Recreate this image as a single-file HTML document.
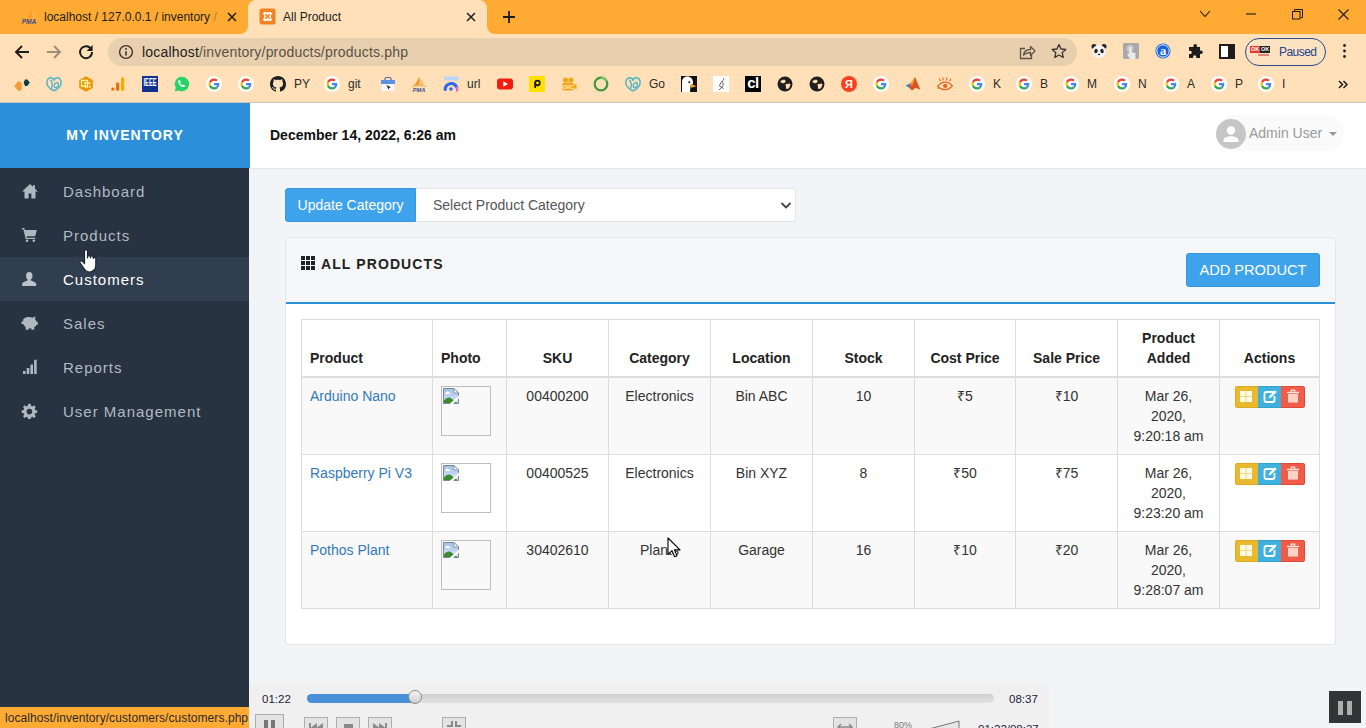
<!DOCTYPE html>
<html><head><meta charset="utf-8"><title>All Product</title>
<style>
*{box-sizing:border-box;margin:0;padding:0}
html,body{width:1366px;height:728px;overflow:hidden;background:#f3f4f8;font-family:"Liberation Sans",sans-serif;}
body{position:relative}
.abs{position:absolute}
/* ---------- browser chrome ---------- */
#tabstrip{position:absolute;left:0;top:0;width:1366px;height:34px;background:#ffaa33}
#tab2{position:absolute;left:248px;top:0;width:239px;height:34px;background:#ffe0b8;border-radius:8px 8px 0 0}
.tabtxt{position:absolute;top:10px;font-size:12px;color:#1d1d1d;white-space:nowrap}
#toolbar{position:absolute;left:0;top:34px;width:1366px;height:34px;background:#ffe0b8}
#omni{position:absolute;left:108px;top:4px;width:969px;height:28px;border-radius:14px;background:#e8cfae}
#omni .url{position:absolute;left:34px;top:6px;font-size:14px;letter-spacing:.19px;color:#5a5247;white-space:nowrap}
#omni .url b{font-weight:normal;color:#1d1d1d}
#bookmarks{position:absolute;left:0;top:68px;width:1366px;height:35px;background:#ffe0b8;border-bottom:1px solid #c9c3ba}
.bm{position:absolute;top:8px;width:16px;height:16px}
.bmt{position:absolute;top:9px;font-size:12px;color:#2a2a2a;white-space:nowrap}
/* ---------- page ---------- */
#page{position:absolute;left:0;top:103px;width:1366px;height:625px;background:#f3f4f8;overflow:hidden}
#sidebar{position:absolute;left:0;top:0;width:249px;height:625px;background:#273341}
#brand{position:absolute;left:0;top:0;width:250px;height:65px;background:#2b90d9;color:#fff;font-weight:bold;font-size:14px;letter-spacing:1px;text-align:center;line-height:65px}
#topbar{position:absolute;left:250px;top:0;width:1116px;height:66px;background:#fff;border-bottom:1px solid #e3e6ea}
#topbar .date{position:absolute;left:20px;top:24px;font-size:14px;font-weight:bold;color:#111}
.nav{position:absolute;left:0;width:249px;height:44px;color:#b1bac3;font-size:15px;letter-spacing:1px}
.nav span{position:absolute;left:63px;top:14px}
.nav.act{background:#303e4f;color:#fff}

/* ---------- content ---------- */
#upd{position:absolute;left:285px;top:85px;width:131px;height:34px;background:#3fa3ec;color:#fff;font-size:14px;line-height:33px;text-align:center;border-radius:3px 0 0 3px;border:1px solid #3498e0}
#sel{position:absolute;left:416px;top:85px;width:380px;height:34px;background:#fff;border:1px solid #e1e4e8;border-left:none;border-radius:0 4px 4px 0;color:#555;font-size:14px;line-height:32px;padding-left:17px}
#panel{position:absolute;left:285px;top:134px;width:1051px;height:408px;background:#fff;border:1px solid #e4e7ea;border-radius:4px}
#phead{position:absolute;left:0;top:0;width:1049px;height:66px;background:#f5f6f7;border-bottom:2px solid #2b90d9;border-radius:3px 3px 0 0}
#phead .ttl{position:absolute;left:35px;top:18px;font-size:14px;font-weight:bold;letter-spacing:1.1px;color:#222}
#addp{position:absolute;left:900px;top:15px;width:134px;height:34px;background:#3fa3ec;border:1px solid #3498e0;border-radius:3px;color:#fff;font-size:14.6px;line-height:32px;text-align:center}
table{position:absolute;left:15px;top:81px;border-collapse:collapse;width:1018px;table-layout:fixed;font-size:14px;color:#333;background:#fff}
th,td{border:1px solid #ddd;vertical-align:top;text-align:center;line-height:20px;padding:8px}
th{vertical-align:bottom;font-weight:bold;color:#222;border-bottom:2px solid #ddd;padding:8px;background:#fff}
td{height:77px;padding-top:8px}
tr.odd td{background:#f9f9f9}
td.l,th.l{text-align:left}
td a{color:#337ab7;text-decoration:none}
.ph{display:block;width:50px;height:50px;border:1px solid #bdbdbd;background:transparent;margin:0}

.ico{position:absolute;left:21px;fill:#b0b7be}
.nav.act .ico{fill:#bcc3ca}
#user{position:absolute;left:966px;top:12px;width:128px;height:36px;border-radius:18px;background:#fafafa}
#user .av{position:absolute;left:0;top:4px;width:30px;height:30px;border-radius:15px;background:#c6c6c6;overflow:hidden}
#user .nm{position:absolute;left:33px;top:10px;font-size:14px;color:#999;white-space:nowrap}
#user .car{position:absolute;left:113px;top:17px;width:0;height:0;border:4px solid transparent;border-top:4px solid #999;border-bottom:none}
.acts{display:inline-block;width:70px;height:22px;vertical-align:top;position:relative;border-radius:3px;overflow:hidden}
.acts i{position:absolute;top:0;height:22px}
.b1{left:0;width:23px;background:#e9b92f;border:1px solid #dcab22;border-right:none}
.b2{left:23px;width:23px;background:#40b1df;border:1px solid #35a3d1;border-left:none;border-right:none}
.b3{left:46px;width:24px;background:#f15c48;border:1px solid #de4a37;border-left:none}
.acts svg{position:absolute;left:0;top:0}
.brk{position:absolute;left:1px;top:1px}
.ph{position:relative}

/* ---------- overlays ---------- */
#status{position:absolute;left:0;top:707px;width:254px;height:21px;background:#ffaa33;border-top-right-radius:4px;font-size:12px;letter-spacing:.07px;color:#2a2a2a;line-height:23px;padding-left:5px;white-space:nowrap;overflow:hidden}
#vlc{position:absolute;left:249px;top:683px;width:800px;height:45px;background:#f0f0f0;overflow:hidden}
#vlc .t{position:absolute;top:10px;font-size:11.5px;color:#1b1b3a}
#vlc .trk{position:absolute;left:58px;top:10.5px;width:687px;height:9px;border-radius:4.5px;background:linear-gradient(#cfcfcf,#e2e2e2)}
#vlc .fil{position:absolute;left:58px;top:10.5px;width:108px;height:9px;border-radius:4.5px 0 0 4.5px;background:#4a90d9}
#vlc .knob{position:absolute;left:159px;top:7px;width:14px;height:14px;border-radius:7px;background:linear-gradient(#f4f4f4,#cfcfcf);border:1px solid #8a8a8a}
.vb{position:absolute;top:34px;width:24px;height:20px;background:#e3e3e3;border:1px solid #adadad}
#pausebox{position:absolute;left:1329px;top:691px;width:32px;height:32px;background:#323436}
#pausebox i{position:absolute;top:10px;width:5px;height:14px;background:#adafad}
</style></head><body>
<!--CHROME-->
<div id="tabstrip">
  <svg class="abs" style="left:20px;top:7px" width="18" height="18" viewBox="0 0 18 18"><path d="M7 11c1.800-2 3.300-4.500 4.200-7.500 1 2.500 1 5 .3 7.500z" fill="#ff9a30"/><path d="M12.300 11c.6-2 .6-4 .1-5.800 1.500 1.700 2.500 3.700 2.900 5.800z" fill="#ffb760"/><text x="9" y="16.500" text-anchor="middle" font-family="Liberation Sans,sans-serif" font-size="6.600" font-weight="bold" font-style="italic" fill="#3d4f8a">PMA</text></svg>
  <div class="tabtxt" style="left:44px;width:176px;overflow:hidden;padding-left:0"><span style="margin-left:0">localhost / 127.0.0.1 / inventory <span style="opacity:.35">/</span></span></div>
  <svg class="abs" style="left:227px;top:12px" width="10" height="10" viewBox="0 0 10 10"><path d="M1 1l8 8M9 1l-8 8" stroke="#1d1d1d" stroke-width="1.500"/></svg>
  <div id="tab2">
    <svg class="abs" style="left:11px;top:8px" width="17" height="17" viewBox="0 0 17 17"><rect x=".5" y=".5" width="16" height="16" rx="2.500" fill="#f58220"/><path d="M4.200 5.500a1.800 1.800 0 0 1 3-1.300h2.600a1.800 1.800 0 0 1 3 1.300c0 .8-.5 1.300-1 1.700v2.600c.5.400 1 .9 1 1.700a1.800 1.800 0 0 1-3 1.300H7.200a1.800 1.800 0 0 1-3-1.300c0-.8.500-1.300 1-1.700V7.200c-.5-.4-1-.9-1-1.700z" fill="#fff"/><path d="M6.300 6.200l4.400 4.600M10.700 6.200l-4.400 4.600" stroke="#f58220" stroke-width="1.600"/></svg>
    <div class="tabtxt" style="left:35px">All Product</div>
    <svg class="abs" style="left:218px;top:12px" width="10" height="10" viewBox="0 0 10 10"><path d="M1 1l8 8M9 1l-8 8" stroke="#1d1d1d" stroke-width="1.500"/></svg>
    <svg class="abs" style="left:-8px;top:26px" width="8" height="8" viewBox="0 0 8 8"><path d="M8 0v8H0a8 8 0 0 0 8-8z" fill="#ffe0b8"/></svg>
    <svg class="abs" style="left:239px;top:26px" width="8" height="8" viewBox="0 0 8 8"><path d="M0 0v8h8a8 8 0 0 1-8-8z" fill="#ffe0b8"/></svg>
  </div>
  <svg class="abs" style="left:502px;top:10px" width="14" height="14" viewBox="0 0 14 14"><path d="M7 1v12M1 7h12" stroke="#1d1d1d" stroke-width="1.800"/></svg>
  <svg class="abs" style="left:1199px;top:10px" width="12" height="8" viewBox="0 0 12 8"><path d="M1 1l5 5.500L11 1" fill="none" stroke="#1d1d1d" stroke-width="1.100"/></svg>
  <svg class="abs" style="left:1246px;top:13px" width="10" height="2" viewBox="0 0 10 2"><path d="M0 1h10" stroke="#1d1d1d" stroke-width="1.100"/></svg>
  <svg class="abs" style="left:1292px;top:9px" width="11" height="11" viewBox="0 0 11 11"><rect x=".5" y="2.500" width="7.500" height="7.500" fill="none" stroke="#1d1d1d"/><path d="M2.500 2.500v-2h8v8h-2" fill="none" stroke="#1d1d1d"/></svg>
  <svg class="abs" style="left:1338px;top:9px" width="11" height="11" viewBox="0 0 11 11"><path d="M.5.500l10 10M10.500.500l-10 10" stroke="#1d1d1d" stroke-width="1.100"/></svg>
</div>
<div id="toolbar">
  <svg class="abs" style="left:14px;top:10px" width="16" height="16" viewBox="0 0 16 16"><path d="M15 8H2.500M8 2L2 8l6 6" fill="none" stroke="#1d1d1d" stroke-width="1.900"/></svg>
  <svg class="abs" style="left:46px;top:10px" width="16" height="16" viewBox="0 0 16 16"><path d="M1 8h12.500M8 2l6 6-6 6" fill="none" stroke="#a08d78" stroke-width="1.900"/></svg>
  <svg class="abs" style="left:78px;top:10px" width="16" height="16" viewBox="0 0 16 16"><path d="M13.200 5.200A6 6 0 1 0 14 8" fill="none" stroke="#1d1d1d" stroke-width="1.900"/><path d="M14.600 1v6h-6z" fill="#1d1d1d"/></svg>
  <div id="omni">
    <svg class="abs" style="left:10px;top:6px" width="16" height="16" viewBox="0 0 16 16"><circle cx="8" cy="8" r="6.400" fill="none" stroke="#3a352f" stroke-width="1.400"/><path d="M8 7.200v4.300" stroke="#3a352f" stroke-width="1.600"/><circle cx="8" cy="4.900" r=".95" fill="#3a352f"/></svg>
    <div class="url"><b>localhost</b>/inventory/products/products.php</div>
    <svg class="abs" style="left:911px;top:6px" width="17" height="16" viewBox="0 0 17 16"><path d="M6 4.500H1.500v10h11V11" fill="none" stroke="#5a5247" stroke-width="1.300"/><path d="M4.500 11c.5-4 3-5.500 7-5.500V2.500l4.500 4.500-4.500 4.500V8.500c-3 0-5 .5-7 2.500z" fill="none" stroke="#5a5247" stroke-width="1.300" stroke-linejoin="round"/></svg>
    <svg class="abs" style="left:943px;top:5px" width="16" height="16" viewBox="0 0 16 16"><path d="M8 1.500l2 4.500 4.800.5-3.600 3.200 1 4.800L8 12l-4.200 2.500 1-4.800L1.200 6.500 6 6z" fill="none" stroke="#3a352f" stroke-width="1.300" stroke-linejoin="round"/></svg>
  </div>
  <svg class="abs" style="left:1091px;top:9px" width="16" height="16" viewBox="0 0 16 16"><circle cx="3" cy="3.500" r="2.500" fill="#222"/><circle cx="13" cy="3.500" r="2.500" fill="#222"/><ellipse cx="8" cy="8.500" rx="7" ry="6.500" fill="#f4f4f4"/><ellipse cx="5" cy="8" rx="1.700" ry="2.200" fill="#222" transform="rotate(20 5 8)"/><ellipse cx="11" cy="8" rx="1.700" ry="2.200" fill="#222" transform="rotate(-20 11 8)"/><ellipse cx="8" cy="11.500" rx="1.200" ry=".8" fill="#222"/></svg>
  <svg class="abs" style="left:1123px;top:9px" width="16" height="16" viewBox="0 0 16 16"><rect width="16" height="16" rx="1.500" fill="#a9a9a9"/><circle cx="7" cy="5.500" r="3.500" fill="#c9c9c9"/><path d="M6 5v6l-1.500-1v2l2.500 4h5.500v-6l-4-1V5a1.200 1.200 0 0 0-2.500 0z" fill="#e9e9e9"/></svg>
  <svg class="abs" style="left:1155px;top:9px" width="16" height="16" viewBox="0 0 16 16"><circle cx="8" cy="8" r="7.600" fill="#1a63d8"/><circle cx="8" cy="8" r="6.200" fill="none" stroke="#fff" stroke-width=".9"/><text x="8" y="11.600" text-anchor="middle" font-family="Liberation Serif,serif" font-size="12.500" font-weight="bold" fill="#fff">a</text></svg>
  <svg class="abs" style="left:1187px;top:9px" width="16" height="16" viewBox="0 0 16 16"><path d="M6.500 2.800a1.700 1.700 0 0 1 3.400 0V4H13v3.500h1a1.800 1.800 0 0 1 0 3.600h-1V15H9.300v-1.200a1.600 1.600 0 0 0-3.200 0V15H2v-4h1.200a1.600 1.600 0 0 0 0-3.200H2V4h4.500z" fill="#1d1d1d"/></svg>
  <svg class="abs" style="left:1219px;top:10px" width="16" height="15" viewBox="0 0 16 15"><rect x="1" y="1" width="14" height="13" fill="#fff" stroke="#1d1d1d" stroke-width="2"/><rect x="9" y="1" width="6" height="13" fill="#1d1d1d"/></svg>
  <div class="abs" style="left:1245px;top:4px;width:81px;height:28px;border:1px solid #2a4a8a;border-radius:14px;background:#fbe3c2">
    <div class="abs" style="left:4px;top:5px;width:20px;height:16px;font-size:5.500px;font-weight:bold;color:#fff;line-height:7px"><span style="position:absolute;left:0;top:2px;background:#e23b2a;padding:0 1px">OK</span><span style="position:absolute;left:10px;top:2px;background:#222;padding:0 1px">OK</span><span style="position:absolute;left:8px;top:10px;width:11px;height:2px;background:#e2837a"></span></div>
    <div class="abs" style="left:33px;top:6px;font-size:12px;color:#27428a;letter-spacing:-.55px">Paused</div>
  </div>
  <svg class="abs" style="left:1342px;top:9px" width="5" height="16" viewBox="0 0 5 16"><circle cx="2.500" cy="2.500" r="1.400" fill="#1d1d1d"/><circle cx="2.500" cy="8" r="1.400" fill="#1d1d1d"/><circle cx="2.500" cy="13.500" r="1.400" fill="#1d1d1d"/></svg>
</div>
<div id="bookmarks">
  <svg class="bm" style="left:14px" viewBox="0 0 16 16"><path d="M.2 10l4.300-5 3.200 1.500v7.500L4.500 15z" fill="#f7983a"/><path d="M11 3.500l2.300 0 2.500 3-2.500 3.500h-2.300l-1.300-3.300z" fill="#0d3c47"/></svg>
  <svg class="bm" style="left:46px" viewBox="0 0 16 16"><path d="M8 14.800C4 13 .8 10 .8 6.300.8 3.500 2.700 1.600 4.900 1.700 6.500 1.800 7.600 3 8 4.300 8.400 3 9.500 1.800 11.100 1.700c2.200-.1 4.100 1.800 4.100 4.600 0 3.700-3.200 6.700-7.200 8.500z" fill="none" stroke="#55b4ca" stroke-width="1.500" stroke-linejoin="round"/><path d="M4.300 3.800c2 1.800 2.700 5.700 1.200 8.800M12.200 7c-2.200-.7-4.300.9-4 3.100.3 2 2.700 2.200 3.700.6.600-1 .8-2.400.3-3.700z" fill="none" stroke="#55b4ca" stroke-width="1.400"/></svg>
  <svg class="bm" style="left:78px" viewBox="0 0 16 16"><path d="M8 .3l6.800 3.800v7.800L8 15.700 1.200 11.900V4.100z" fill="#e8960c"/><path d="M3.500 4.500h6v5.500h-6zM6 7h6.500M7.300 12V8.500M9.500 12V7.800M11.800 12V9.500" fill="none" stroke="#fff3a0" stroke-width="1.300"/></svg>
  <svg class="bm" style="left:110px" viewBox="0 0 16 16"><rect x="11" y="1.200" width="3.300" height="13.600" rx="1.600" fill="#f9ab00"/><rect x="6" y="6.200" width="3.300" height="8.600" rx="1.600" fill="#e8710a"/><circle cx="2.900" cy="13.100" r="1.700" fill="#e8710a"/></svg>
  <svg class="bm" style="left:142px" viewBox="0 0 16 16"><rect width="16" height="16" fill="#12308f"/><text x="8" y="8" text-anchor="middle" font-family="Liberation Sans,sans-serif" font-size="7.500" font-weight="bold" fill="#fff" textLength="13" lengthAdjust="spacingAndGlyphs" transform="translate(0 -1.500) scale(1 1.450)">IEEE</text></svg>
  <svg class="bm" style="left:174px" viewBox="0 0 16 16"><path d="M8 .8a7.200 7.200 0 0 0-6.200 10.900L.8 15.400l3.800-1A7.200 7.200 0 1 0 8 .8z" fill="#25d366"/><path d="M5.700 4.300c-.3-.5-.9-.4-1.200.1-.8 1.300-.2 3 1.500 4.800 1.800 1.800 3.500 2.300 4.800 1.500.5-.3.600-.9.100-1.200l-1.300-.8c-.3-.2-.7-.1-.9.200l-.3.400c-.9-.4-1.900-1.400-2.300-2.300l.4-.3c.3-.2.400-.6.200-.9z" fill="#fff"/></svg>
  <svg class="bm" style="left:206px" viewBox="0 0 16 16"><circle cx="8" cy="8" r="8" fill="#fff"/><g transform="translate(2.500 2.500) scale(0.229)"><path fill="#EA4335" d="M24 9.5c3.54 0 6.71 1.22 9.21 3.6l6.85-6.85C35.9 2.38 30.47 0 24 0 14.62 0 6.51 5.38 2.56 13.22l7.98 6.19C12.43 13.72 17.74 9.5 24 9.5z"/><path fill="#4285F4" d="M46.98 24.55c0-1.57-.15-3.09-.38-4.55H24v9.02h12.94c-.58 2.96-2.26 5.48-4.78 7.18l7.73 6c4.51-4.18 7.09-10.36 7.09-17.65z"/><path fill="#FBBC05" d="M10.53 28.59c-.48-1.45-.76-2.99-.76-4.59s.27-3.14.76-4.59l-7.98-6.19C.92 16.46 0 20.12 0 24c0 3.88.92 7.54 2.56 10.78l7.97-6.19z"/><path fill="#34A853" d="M24 48c6.480 0 11.93-2.13 15.89-5.81l-7.73-6c-2.15 1.45-4.92 2.3-8.16 2.3-6.26 0-11.57-4.22-13.47-9.91l-7.98 6.19C6.51 42.62 14.62 48 24 48z"/></g></svg>
  <svg class="bm" style="left:238px" viewBox="0 0 16 16"><circle cx="8" cy="8" r="8" fill="#fff"/><g transform="translate(2.500 2.500) scale(0.229)"><path fill="#EA4335" d="M24 9.5c3.54 0 6.71 1.22 9.21 3.6l6.85-6.85C35.9 2.38 30.47 0 24 0 14.62 0 6.51 5.38 2.56 13.22l7.98 6.19C12.43 13.72 17.74 9.5 24 9.5z"/><path fill="#4285F4" d="M46.98 24.55c0-1.57-.15-3.09-.38-4.55H24v9.02h12.94c-.58 2.96-2.26 5.48-4.78 7.18l7.73 6c4.51-4.18 7.09-10.36 7.09-17.65z"/><path fill="#FBBC05" d="M10.53 28.59c-.48-1.45-.76-2.99-.76-4.59s.27-3.14.76-4.59l-7.98-6.19C.92 16.46 0 20.12 0 24c0 3.88.92 7.54 2.56 10.78l7.97-6.19z"/><path fill="#34A853" d="M24 48c6.480 0 11.93-2.13 15.89-5.81l-7.73-6c-2.15 1.45-4.92 2.3-8.16 2.3-6.26 0-11.57-4.22-13.47-9.91l-7.98 6.19C6.51 42.62 14.62 48 24 48z"/></g></svg>
  <svg class="bm" style="left:270px" viewBox="0 0 16 16"><path fill="#1b1f23" d="M8 0C3.580 0 0 3.580 0 8c0 3.540 2.290 6.530 5.470 7.590.4.070.55-.17.55-.38 0-.19-.01-.82-.01-1.490-2.010.37-2.530-.49-2.690-.94-.09-.23-.48-.94-.82-1.130-.28-.15-.68-.52-.01-.53.63-.01 1.080.58 1.230.82.72 1.210 1.870.87 2.330.66.070-.52.280-.87.510-1.070-1.780-.2-3.640-.89-3.640-3.950 0-.87.310-1.590.82-2.150-.08-.2-.36-1.020.08-2.120 0 0 .67-.21 2.200.82.64-.18 1.320-.27 2-.27.680 0 1.360.09 2 .27 1.530-1.040 2.200-.82 2.200-.82.44 1.100.16 1.920.08 2.120.51.56.82 1.270.82 2.150 0 3.070-1.870 3.750-3.650 3.950.29.25.54.73.54 1.480 0 1.070-.01 1.930-.01 2.200 0 .21.15.46.55.38A8.013 8.013 0 0 0 16 8c0-4.420-3.580-8-8-8z"/></svg>
  <svg class="bm" style="left:324px" viewBox="0 0 16 16"><circle cx="8" cy="8" r="8" fill="#fff"/><g transform="translate(2.500 2.500) scale(0.229)"><path fill="#EA4335" d="M24 9.5c3.54 0 6.71 1.22 9.21 3.6l6.85-6.85C35.9 2.38 30.47 0 24 0 14.62 0 6.51 5.38 2.56 13.22l7.98 6.19C12.43 13.72 17.74 9.5 24 9.5z"/><path fill="#4285F4" d="M46.98 24.55c0-1.57-.15-3.09-.38-4.55H24v9.02h12.94c-.58 2.96-2.26 5.48-4.78 7.18l7.73 6c4.51-4.18 7.09-10.36 7.09-17.65z"/><path fill="#FBBC05" d="M10.53 28.59c-.48-1.45-.76-2.99-.76-4.59s.27-3.14.76-4.59l-7.98-6.19C.92 16.46 0 20.12 0 24c0 3.88.92 7.54 2.56 10.78l7.97-6.19z"/><path fill="#34A853" d="M24 48c6.480 0 11.93-2.13 15.89-5.81l-7.73-6c-2.15 1.45-4.92 2.3-8.16 2.3-6.26 0-11.57-4.22-13.47-9.91l-7.98 6.19C6.51 42.62 14.62 48 24 48z"/></g></svg>
  <svg class="bm" style="left:380px" viewBox="0 0 16 16"><path d="M5 4V2.800C5 2 5.600 1.500 6.400 1.500h3.200c.8 0 1.400.5 1.400 1.300V4" fill="none" stroke="#4a6fa8" stroke-width="1.200"/><rect x="1" y="4" width="14" height="4" fill="#5b8fe0"/><rect x="1.500" y="8" width="13" height="7" fill="#f4f6fb"/><path d="M6.500 9l2 4.500.8-1.700 1.700-.6z" fill="#222"/></svg>
  <svg class="bm" style="left:411px" viewBox="0 0 16 16"><path d="M3 9.500c2-2.500 4-5.500 5-9 1.200 3 1.200 6 .3 9z" fill="#f39a2e"/><path d="M9.300 9.500c.8-2.300.8-4.800.2-7 1.800 2 3 4.500 3.500 7z" fill="#f7b766"/><path d="M1 10.500c4.500-1.200 9.500-1.200 14 0" stroke="#f39a2e" stroke-width=".8" fill="none"/><text x="8" y="15.600" text-anchor="middle" font-family="Liberation Sans,sans-serif" font-size="5.600" font-weight="bold" font-style="italic" fill="#3d4f8a">PMA</text></svg>
  <svg class="bm" style="left:443px" viewBox="0 0 16 16"><rect x="1" y=".5" width="15" height="4" rx="1" fill="#bcd6f7"/><path d="M2.200 13.500a6 6 0 0 1 11.500-2.300" fill="none" stroke="#2a6af0" stroke-width="3.100" stroke-linecap="round"/><path d="M14 11.500a6 6 0 0 1 0 3" fill="none" stroke="#d36be0" stroke-width="2.400" stroke-linecap="round"/><circle cx="8" cy="13" r="1.800" fill="#2a6af0"/></svg>
  <svg class="bm" style="left:497px" viewBox="0 0 16 16"><rect x="0" y="2.500" width="16" height="11" rx="3" fill="#f21b0d"/><path d="M6.300 5.300v5.400L11 8z" fill="#fff"/></svg>
  <svg class="bm" style="left:529px" viewBox="0 0 16 16"><rect width="16" height="16" fill="#ffe000"/><circle cx="8.500" cy="7" r="2.300" fill="none" stroke="#111" stroke-width="1.700"/><path d="M6.200 6.500V12" stroke="#111" stroke-width="1.700"/></svg>
  <svg class="bm" style="left:561px" viewBox="0 0 16 16"><circle cx="4.500" cy="4" r="2.500" fill="#f5a31a"/><circle cx="10" cy="4" r="2.500" fill="#f5a31a"/><rect x="1.500" y="6.500" width="11" height="8" rx="1.500" fill="#f5a31a"/><path d="M12.500 9.500l3-2v6l-3-2z" fill="#f5a31a"/><text x="7" y="12.800" text-anchor="middle" font-family="Liberation Sans,sans-serif" font-size="4.500" font-weight="bold" fill="#fff2c8">OHC</text></svg>
  <svg class="bm" style="left:593px" viewBox="0 0 16 16"><circle cx="8" cy="8" r="6.300" fill="none" stroke="#3e9a3a" stroke-width="2.300"/><path d="M8 1.700a6.300 6.300 0 0 1 5.500 3.200" fill="none" stroke="#7cc46f" stroke-width="2.300"/></svg>
  <svg class="bm" style="left:625px" viewBox="0 0 16 16"><path d="M8 14.800C4 13 .8 10 .8 6.300.8 3.500 2.700 1.600 4.900 1.700 6.500 1.800 7.600 3 8 4.300 8.400 3 9.500 1.800 11.100 1.700c2.200-.1 4.100 1.800 4.100 4.600 0 3.700-3.200 6.700-7.200 8.500z" fill="none" stroke="#55b4ca" stroke-width="1.500" stroke-linejoin="round"/><path d="M4.300 3.800c2 1.800 2.700 5.700 1.200 8.800M12.200 7c-2.200-.7-4.300.9-4 3.100.3 2 2.700 2.200 3.700.6.600-1 .8-2.400.3-3.700z" fill="none" stroke="#55b4ca" stroke-width="1.400"/></svg>
  <svg class="bm" style="left:681px" viewBox="0 0 16 16"><rect width="16" height="16" fill="#111"/><path d="M1 16V6c0-3.500 2.500-5.500 5.500-5.500S12 3 12 6.500c0 2-1 3-2.500 3.500L9 16z" fill="#fff"/><path d="M10 8l5.500 2.200-5 1.600-1.500-2z" fill="#f5a21b"/><circle cx="8.300" cy="6.300" r="1" fill="#111"/></svg>
  <svg class="bm" style="left:713px" viewBox="0 0 16 16"><rect width="16" height="16" fill="#fff"/><path d="M10 2c1 .5 1 2 0 2.500-1.500 1-3 3-3.500 5.500M9 5c1.500 2 1.500 4 0 6l-3 3M6.500 10l4 2.500" fill="none" stroke="#555" stroke-width=".9"/></svg>
  <div class="bm" style="left:745px;background:#000"><span style="position:absolute;left:0;top:-1px;width:16px;text-align:center;font-size:15px;font-weight:bold;color:#fff;letter-spacing:-.5px;line-height:16px">cl</span></div>
  <svg class="bm" style="left:777px" viewBox="0 0 16 16"><circle cx="8" cy="8" r="7.500" fill="#1f1f1f"/><path d="M3.200 5.500c1.500-1.500 3-2 4.800-1.500l.8 1.700-1.800 1.500-2.300-.2zM8.500 8.200l3.800-.7 1.200 1.300-1.500 3.500-2.700 1z" fill="#ffe0b8"/></svg>
  <svg class="bm" style="left:809px" viewBox="0 0 16 16"><circle cx="8" cy="8" r="7.500" fill="#1f1f1f"/><path d="M3.200 5.500c1.500-1.500 3-2 4.800-1.500l.8 1.700-1.800 1.500-2.300-.2zM8.500 8.200l3.800-.7 1.200 1.300-1.500 3.500-2.700 1z" fill="#ffe0b8"/></svg>
  <div class="bm" style="left:841px;background:#fc3f1d;border-radius:8px"><span style="position:absolute;left:0;top:2px;width:16px;text-align:center;font-size:11px;font-weight:bold;color:#fff;line-height:12px">Я</span></div>
  <svg class="bm" style="left:873px" viewBox="0 0 16 16"><circle cx="8" cy="8" r="8" fill="#fff"/><g transform="translate(2.500 2.500) scale(0.229)"><path fill="#EA4335" d="M24 9.5c3.54 0 6.71 1.22 9.21 3.6l6.85-6.85C35.9 2.38 30.47 0 24 0 14.62 0 6.51 5.38 2.56 13.22l7.98 6.19C12.43 13.72 17.74 9.5 24 9.5z"/><path fill="#4285F4" d="M46.98 24.55c0-1.57-.15-3.09-.38-4.55H24v9.02h12.94c-.58 2.96-2.26 5.48-4.78 7.18l7.73 6c4.51-4.18 7.09-10.36 7.09-17.65z"/><path fill="#FBBC05" d="M10.53 28.59c-.48-1.45-.76-2.99-.76-4.59s.27-3.14.76-4.59l-7.98-6.19C.92 16.46 0 20.12 0 24c0 3.88.92 7.54 2.56 10.78l7.97-6.19z"/><path fill="#34A853" d="M24 48c6.480 0 11.93-2.13 15.89-5.81l-7.73-6c-2.15 1.45-4.92 2.3-8.16 2.3-6.26 0-11.57-4.22-13.47-9.91l-7.98 6.19C6.51 42.62 14.62 48 24 48z"/></g></svg>
  <svg class="bm" style="left:905px" viewBox="0 0 16 16"><path d="M.5 9.500l4.500-2 2 2.500-2.500 2z" fill="#4a7fd0"/><path d="M5 7.500c2-1.500 3.500-4.500 5-6.500 1.500 3 3 8 5.500 12.500-2-.5-3.500-2-5-1.500-1.500.5-2 2-3.500 2.500L4.500 12z" fill="#d9541e"/><path d="M5 7.500c2-1.500 3.500-4.500 5-6.500-.5 3-1.500 6-3 9z" fill="#f2a13c"/></svg>
  <svg class="bm" style="left:937px" viewBox="0 0 16 16"><path d="M.8 10.200C3 7.300 5.500 6.200 8.300 6.200s5 1.200 7 3.700c-2 2.600-4.300 3.700-7 3.700S3 12.600.8 10.200z" fill="none" stroke="#e8641b" stroke-width="1.300"/><circle cx="8.200" cy="9.900" r="2.100" fill="#e8641b"/><path d="M3.500 5.200L2.300 2.800M6.300 4.300L5.700 1.500M9.500 4.300l.4-2.800M12.500 5.200l1.400-2.400M.5 12.500l2-1" stroke="#e8641b" stroke-width="1.100" fill="none"/></svg>
  <svg class="bm" style="left:969px" viewBox="0 0 16 16"><circle cx="8" cy="8" r="8" fill="#fff"/><g transform="translate(2.500 2.500) scale(0.229)"><path fill="#EA4335" d="M24 9.5c3.54 0 6.71 1.22 9.21 3.6l6.85-6.85C35.9 2.38 30.47 0 24 0 14.62 0 6.51 5.38 2.56 13.22l7.98 6.19C12.43 13.72 17.74 9.5 24 9.5z"/><path fill="#4285F4" d="M46.98 24.55c0-1.57-.15-3.09-.38-4.55H24v9.02h12.94c-.58 2.96-2.26 5.48-4.78 7.18l7.73 6c4.51-4.18 7.09-10.36 7.09-17.65z"/><path fill="#FBBC05" d="M10.53 28.59c-.48-1.45-.76-2.99-.76-4.59s.27-3.14.76-4.59l-7.98-6.19C.92 16.46 0 20.12 0 24c0 3.88.92 7.54 2.56 10.78l7.97-6.19z"/><path fill="#34A853" d="M24 48c6.480 0 11.93-2.13 15.89-5.81l-7.73-6c-2.15 1.45-4.92 2.3-8.16 2.3-6.26 0-11.57-4.22-13.47-9.91l-7.98 6.19C6.51 42.62 14.62 48 24 48z"/></g></svg>
  <svg class="bm" style="left:1016px" viewBox="0 0 16 16"><circle cx="8" cy="8" r="8" fill="#fff"/><g transform="translate(2.500 2.500) scale(0.229)"><path fill="#EA4335" d="M24 9.5c3.54 0 6.71 1.22 9.21 3.6l6.85-6.85C35.9 2.38 30.47 0 24 0 14.62 0 6.51 5.38 2.56 13.22l7.98 6.19C12.43 13.72 17.74 9.5 24 9.5z"/><path fill="#4285F4" d="M46.98 24.55c0-1.57-.15-3.09-.38-4.55H24v9.02h12.94c-.58 2.96-2.26 5.48-4.78 7.18l7.73 6c4.51-4.18 7.09-10.36 7.09-17.65z"/><path fill="#FBBC05" d="M10.53 28.59c-.48-1.45-.76-2.99-.76-4.59s.27-3.14.76-4.59l-7.98-6.19C.92 16.46 0 20.12 0 24c0 3.88.92 7.54 2.56 10.78l7.97-6.19z"/><path fill="#34A853" d="M24 48c6.480 0 11.93-2.13 15.89-5.81l-7.73-6c-2.15 1.45-4.92 2.3-8.16 2.3-6.26 0-11.57-4.22-13.47-9.91l-7.98 6.19C6.51 42.62 14.62 48 24 48z"/></g></svg>
  <svg class="bm" style="left:1063px" viewBox="0 0 16 16"><circle cx="8" cy="8" r="8" fill="#fff"/><g transform="translate(2.500 2.500) scale(0.229)"><path fill="#EA4335" d="M24 9.5c3.54 0 6.71 1.22 9.21 3.6l6.85-6.85C35.9 2.38 30.47 0 24 0 14.62 0 6.51 5.38 2.56 13.22l7.98 6.19C12.43 13.72 17.74 9.5 24 9.5z"/><path fill="#4285F4" d="M46.98 24.55c0-1.57-.15-3.09-.38-4.55H24v9.02h12.94c-.58 2.96-2.26 5.48-4.78 7.18l7.73 6c4.51-4.18 7.09-10.36 7.09-17.65z"/><path fill="#FBBC05" d="M10.53 28.59c-.48-1.45-.76-2.99-.76-4.59s.27-3.14.76-4.59l-7.98-6.19C.92 16.46 0 20.12 0 24c0 3.88.92 7.54 2.56 10.78l7.97-6.19z"/><path fill="#34A853" d="M24 48c6.480 0 11.93-2.13 15.89-5.81l-7.73-6c-2.15 1.45-4.92 2.3-8.16 2.3-6.26 0-11.57-4.22-13.47-9.91l-7.98 6.19C6.51 42.62 14.62 48 24 48z"/></g></svg>
  <svg class="bm" style="left:1114px" viewBox="0 0 16 16"><circle cx="8" cy="8" r="8" fill="#fff"/><g transform="translate(2.500 2.500) scale(0.229)"><path fill="#EA4335" d="M24 9.5c3.54 0 6.71 1.22 9.21 3.6l6.85-6.85C35.9 2.38 30.47 0 24 0 14.62 0 6.51 5.38 2.56 13.22l7.98 6.19C12.43 13.72 17.74 9.5 24 9.5z"/><path fill="#4285F4" d="M46.98 24.55c0-1.57-.15-3.09-.38-4.55H24v9.02h12.94c-.58 2.96-2.26 5.48-4.78 7.18l7.73 6c4.51-4.18 7.09-10.36 7.09-17.65z"/><path fill="#FBBC05" d="M10.53 28.59c-.48-1.45-.76-2.99-.76-4.59s.27-3.14.76-4.59l-7.98-6.19C.92 16.46 0 20.12 0 24c0 3.88.92 7.54 2.56 10.78l7.97-6.19z"/><path fill="#34A853" d="M24 48c6.480 0 11.93-2.13 15.89-5.81l-7.73-6c-2.15 1.45-4.92 2.3-8.16 2.3-6.26 0-11.57-4.22-13.47-9.91l-7.98 6.19C6.51 42.62 14.62 48 24 48z"/></g></svg>
  <svg class="bm" style="left:1163px" viewBox="0 0 16 16"><circle cx="8" cy="8" r="8" fill="#fff"/><g transform="translate(2.500 2.500) scale(0.229)"><path fill="#EA4335" d="M24 9.5c3.54 0 6.71 1.22 9.21 3.6l6.85-6.85C35.9 2.38 30.47 0 24 0 14.62 0 6.51 5.38 2.56 13.22l7.98 6.19C12.43 13.72 17.74 9.5 24 9.5z"/><path fill="#4285F4" d="M46.98 24.55c0-1.57-.15-3.09-.38-4.55H24v9.02h12.94c-.58 2.96-2.26 5.48-4.78 7.18l7.73 6c4.51-4.18 7.09-10.36 7.09-17.65z"/><path fill="#FBBC05" d="M10.53 28.59c-.48-1.45-.76-2.99-.76-4.59s.27-3.14.76-4.59l-7.98-6.19C.92 16.46 0 20.12 0 24c0 3.88.92 7.54 2.56 10.78l7.97-6.19z"/><path fill="#34A853" d="M24 48c6.480 0 11.93-2.13 15.89-5.81l-7.73-6c-2.15 1.45-4.92 2.3-8.16 2.3-6.26 0-11.57-4.22-13.47-9.91l-7.98 6.19C6.51 42.62 14.62 48 24 48z"/></g></svg>
  <svg class="bm" style="left:1211px" viewBox="0 0 16 16"><circle cx="8" cy="8" r="8" fill="#fff"/><g transform="translate(2.500 2.500) scale(0.229)"><path fill="#EA4335" d="M24 9.5c3.54 0 6.71 1.22 9.21 3.6l6.85-6.85C35.9 2.38 30.47 0 24 0 14.62 0 6.51 5.38 2.56 13.22l7.98 6.19C12.43 13.72 17.74 9.5 24 9.5z"/><path fill="#4285F4" d="M46.98 24.55c0-1.57-.15-3.09-.38-4.55H24v9.02h12.94c-.58 2.96-2.26 5.48-4.78 7.18l7.73 6c4.51-4.18 7.09-10.36 7.09-17.65z"/><path fill="#FBBC05" d="M10.53 28.59c-.48-1.45-.76-2.99-.76-4.59s.27-3.14.76-4.59l-7.98-6.19C.92 16.46 0 20.12 0 24c0 3.88.92 7.54 2.56 10.78l7.97-6.19z"/><path fill="#34A853" d="M24 48c6.480 0 11.93-2.13 15.89-5.81l-7.73-6c-2.15 1.45-4.92 2.3-8.16 2.3-6.26 0-11.57-4.22-13.47-9.91l-7.98 6.19C6.51 42.62 14.62 48 24 48z"/></g></svg>
  <svg class="bm" style="left:1258px" viewBox="0 0 16 16"><circle cx="8" cy="8" r="8" fill="#fff"/><g transform="translate(2.500 2.500) scale(0.229)"><path fill="#EA4335" d="M24 9.5c3.54 0 6.71 1.22 9.21 3.6l6.85-6.85C35.9 2.38 30.47 0 24 0 14.62 0 6.51 5.38 2.56 13.22l7.98 6.19C12.43 13.72 17.74 9.5 24 9.5z"/><path fill="#4285F4" d="M46.98 24.55c0-1.57-.15-3.09-.38-4.55H24v9.02h12.94c-.58 2.96-2.26 5.48-4.78 7.18l7.73 6c4.51-4.18 7.09-10.36 7.09-17.65z"/><path fill="#FBBC05" d="M10.53 28.59c-.48-1.45-.76-2.99-.76-4.59s.27-3.14.76-4.59l-7.98-6.19C.92 16.46 0 20.12 0 24c0 3.88.92 7.54 2.56 10.78l7.97-6.19z"/><path fill="#34A853" d="M24 48c6.480 0 11.93-2.13 15.89-5.81l-7.73-6c-2.15 1.45-4.92 2.3-8.16 2.3-6.26 0-11.57-4.22-13.47-9.91l-7.98 6.19C6.51 42.62 14.62 48 24 48z"/></g></svg>
  <div class="bmt" style="left:294px">PY</div>
  <div class="bmt" style="left:348px">git</div>
  <div class="bmt" style="left:467px">url</div>
  <div class="bmt" style="left:649px">Go</div>
  <div class="bmt" style="left:993px">K</div>
  <div class="bmt" style="left:1040px">B</div>
  <div class="bmt" style="left:1087px">M</div>
  <div class="bmt" style="left:1138px">N</div>
  <div class="bmt" style="left:1187px">A</div>
  <div class="bmt" style="left:1235px">P</div>
  <div class="bmt" style="left:1282px">I</div>
  <svg class="abs" style="left:1338px;top:12px" width="10" height="9" viewBox="0 0 10 9"><path d="M1 1l3.500 3.500L1 8M5.500 1L9 4.500 5.500 8" fill="none" stroke="#1d1d1d" stroke-width="1.500"/></svg>
</div>
<!--/CHROME-->
<div id="page">
  <div id="sidebar">
    <div id="brand">MY INVENTORY</div>
    <div class="nav" style="top:66px"><svg class="ico" style="top:14px;left:20.500px" width="18" height="17" viewBox="0 0 17 16"><path d="M8.500 1L1 8h2.300v6.500h3.900V10h2.600v4.500h3.900V8H16L13.200 5.400V2h-2v1.500z"/></svg><span>Dashboard</span></div>
    <div class="nav" style="top:110px"><svg class="ico" style="top:14px" width="17" height="16" viewBox="0 0 17 16"><path d="M.8 1h2.400l.6 2h12l-1.600 6.300H5.500l.3 1.400h8.400v1.300H4.700L2.300 2.300H.8z"/><circle cx="6" cy="13.800" r="1.300"/><circle cx="12.800" cy="13.800" r="1.300"/></svg><span>Products</span></div>
    <div class="nav act" style="top:154px"><svg class="ico" style="top:14px" width="17" height="16" viewBox="0 0 17 16"><path d="M8.300 1c2 0 3.200 1.600 3.200 3.800 0 1.600-.7 3-1.600 3.800v.9c2.800.9 5 1.800 5.300 3.200V15H1.200v-2.300c.3-1.400 2.500-2.300 5.300-3.200v-.9C5.600 7.800 5 6.400 5 4.800 5 2.600 6.300 1 8.300 1z"/></svg><span>Customers</span></div>
    <div class="nav" style="top:198px"><svg class="ico" style="top:14px;left:20px" width="19" height="16" viewBox="0 0 19 16"><path d="M3.200 4.200C4.500 2.600 6.600 2 9 2c1.400 0 2.700.3 3.800.8.700-.8 1.700-1.200 2.800-1.200l-.7 2.500c.8.800 1.400 1.700 1.600 2.600h1.300v3.200h-1.500c-.4.900-1.100 1.700-2 2.300v2.600h-3v-1.500c-.8.100-1.700.1-2.600 0v1.500h-3v-2.700c-1.200-.8-2-1.900-2.400-3.100H1.500V6.500h1.200c.1-.5.200-.8.500-1.300z"/></svg><span>Sales</span></div>
    <div class="nav" style="top:242px"><svg class="ico" style="top:13px" width="17" height="17" viewBox="0 0 17 17"><path d="M2 13h2.600v3H2zM5.700 10h2.600v6H5.700zM9.400 6.500H12V16H9.400zM13.100 1.800h2.600V16h-2.600z"/></svg><span>Reports</span></div>
    <div class="nav" style="top:286px"><svg class="ico" style="top:14px" width="17" height="16" viewBox="0 0 17 16"><path d="M7.200.8h2.400l.4 2 1.400.6 1.700-1.200 1.700 1.700-1.200 1.700.6 1.400 2 .4v2.400l-2 .4-.6 1.400 1.200 1.700-1.700 1.700-1.700-1.200-1.400.6-.4 2H7.200l-.4-2-1.400-.6-1.700 1.200L2 13.300l1.200-1.700-.6-1.400-2-.4V7.400l2-.4.600-1.400L2 3.900l1.700-1.700 1.700 1.200 1.400-.6zM8.400 5.800a2.800 2.800 0 1 0 0 5.600 2.800 2.800 0 0 0 0-5.600z" fill-rule="evenodd"/></svg><span>User Management</span></div>
  </div>
  <div id="topbar"><div class="date">December 14, 2022, 6:26 am</div>
    <div id="user"><div class="av"><svg width="30" height="30" viewBox="0 0 30 30"><circle cx="15" cy="11.500" r="4.200" fill="#fff"/><path d="M7.500 21.500c0-3 4.500-4.300 7.500-4.300s7.500 1.300 7.500 4.300v1.500h-15z" fill="#fff"/></svg></div><div class="nm">Admin User</div><div class="car"></div></div></div>

  <div id="upd">Update Category</div>
  <div id="sel">Select Product Category<svg class="abs" style="left:364px;top:13px" width="12" height="8" viewBox="0 0 12 8"><path d="M1.500 1L6 5.400 10.500 1" fill="none" stroke="#444" stroke-width="1.900"/></svg></div>
  <div id="panel">
    <div id="phead"><svg class="abs" style="left:15px;top:18px" width="14" height="14" viewBox="0 0 14 14" fill="#222"><path d="M0 0h4v4H0zM5 0h4v4H5zM10 0h4v4h-4zM0 5h4v4H0zM5 5h4v4H5zM10 5h4v4h-4zM0 10h4v4H0zM5 10h4v4H5zM10 10h4v4h-4z"/></svg><div class="ttl">ALL PRODUCTS</div><div id="addp">ADD PRODUCT</div></div>
    <table>
    <colgroup><col style="width:131px"><col style="width:74px"><col style="width:102px"><col style="width:102px"><col style="width:102px"><col style="width:102px"><col style="width:101px"><col style="width:102px"><col style="width:102px"><col style="width:100px"></colgroup>
    <tr><th class="l">Product</th><th class="l">Photo</th><th>SKU</th><th>Category</th><th>Location</th><th>Stock</th><th>Cost Price</th><th>Sale Price</th><th>Product Added</th><th>Actions</th></tr>
<tr class="odd"><td class="l"><a>Arduino Nano</a></td><td class="l"><span class="ph"><svg class="brk" width="16" height="16" viewBox="0 0 16 16"><defs><linearGradient id="sky1" x1="0" y1="0" x2="0" y2="1"><stop offset="0" stop-color="#9fc0ea"/><stop offset="1" stop-color="#dbe8f8"/></linearGradient></defs><path d="M.5.500h10.500l4.500 4.500v10.500H.5z" fill="url(#sky1)" stroke="#7d8790"/><path d="M11 .5v4.500h4.500z" fill="#fff" stroke="#7d8790" stroke-width=".8"/><path d="M3 4.500c.5-1.500 2.500-1.500 3 0 1 0 1.500.8 1 1.500H2.500c-.5-.7 0-1.500.5-1.500z" fill="#fff"/><path d="M1 15v-2.500C3 10 6 8.500 8.500 10.500c2 1.500 3.500 3 6.500 4.500z" fill="#3c8a2e"/><path d="M6.500 16L16 7.500v3L10 16z" fill="#fafafa"/></svg></span></td><td>00400200</td><td>Electronics</td><td>Bin ABC</td><td>10</td><td>₹5</td><td>₹10</td><td>Mar 26, 2020, 9:20:18 am</td><td><span class="acts"><i class="b1"></i><i class="b2"></i><i class="b3"></i><svg width="70" height="22" viewBox="0 0 70 22"><path d="M5 5h5.700v5.200H5zM11.300 5H17v5.200h-5.700zM5 10.800h5.700V16H5zM11.300 10.800H17V16h-5.700z" fill="#fffbe6"/><path d="M38.500 6H31.500a2 2 0 0 0-2 2v6a2 2 0 0 0 2 2h6a2 2 0 0 0 2-2v-4" fill="none" stroke="#fff" stroke-width="1.800"/><path d="M33.500 12.500l1-2.800L40 4.300l1.700 1.700-5.500 5.500z" fill="#fff"/><path d="M52 5.800h12v1.400H52z" fill="#ffe9e3"/><path d="M56.300 5.800V4.200h3.400v1.600" fill="none" stroke="#ffe9e3" stroke-width="1.200"/><path d="M53 8h10v8.500H53z" fill="#ffd9d0"/><path d="M55 8v8.500M57 8v8.500M59 8v8.500M61 8v8.500" stroke="#ffc4b8" stroke-width=".6"/></svg></span></td></tr>
<tr><td class="l"><a>Raspberry Pi V3</a></td><td class="l"><span class="ph"><svg class="brk" width="16" height="16" viewBox="0 0 16 16"><defs><linearGradient id="sky2" x1="0" y1="0" x2="0" y2="1"><stop offset="0" stop-color="#9fc0ea"/><stop offset="1" stop-color="#dbe8f8"/></linearGradient></defs><path d="M.5.500h10.500l4.500 4.500v10.500H.5z" fill="url(#sky2)" stroke="#7d8790"/><path d="M11 .5v4.500h4.500z" fill="#fff" stroke="#7d8790" stroke-width=".8"/><path d="M3 4.500c.5-1.500 2.500-1.500 3 0 1 0 1.500.8 1 1.500H2.500c-.5-.7 0-1.500.5-1.500z" fill="#fff"/><path d="M1 15v-2.500C3 10 6 8.500 8.500 10.500c2 1.500 3.500 3 6.500 4.500z" fill="#3c8a2e"/><path d="M6.500 16L16 7.500v3L10 16z" fill="#fafafa"/></svg></span></td><td>00400525</td><td>Electronics</td><td>Bin XYZ</td><td>8</td><td>₹50</td><td>₹75</td><td>Mar 26, 2020, 9:23:20 am</td><td><span class="acts"><i class="b1"></i><i class="b2"></i><i class="b3"></i><svg width="70" height="22" viewBox="0 0 70 22"><path d="M5 5h5.700v5.200H5zM11.300 5H17v5.200h-5.700zM5 10.800h5.700V16H5zM11.300 10.800H17V16h-5.700z" fill="#fffbe6"/><path d="M38.500 6H31.500a2 2 0 0 0-2 2v6a2 2 0 0 0 2 2h6a2 2 0 0 0 2-2v-4" fill="none" stroke="#fff" stroke-width="1.800"/><path d="M33.500 12.500l1-2.800L40 4.300l1.700 1.700-5.500 5.500z" fill="#fff"/><path d="M52 5.800h12v1.400H52z" fill="#ffe9e3"/><path d="M56.300 5.800V4.200h3.400v1.600" fill="none" stroke="#ffe9e3" stroke-width="1.200"/><path d="M53 8h10v8.500H53z" fill="#ffd9d0"/><path d="M55 8v8.500M57 8v8.500M59 8v8.500M61 8v8.500" stroke="#ffc4b8" stroke-width=".6"/></svg></span></td></tr>
<tr class="odd"><td class="l"><a>Pothos Plant</a></td><td class="l"><span class="ph"><svg class="brk" width="16" height="16" viewBox="0 0 16 16"><defs><linearGradient id="sky3" x1="0" y1="0" x2="0" y2="1"><stop offset="0" stop-color="#9fc0ea"/><stop offset="1" stop-color="#dbe8f8"/></linearGradient></defs><path d="M.5.500h10.500l4.500 4.500v10.500H.5z" fill="url(#sky3)" stroke="#7d8790"/><path d="M11 .5v4.500h4.500z" fill="#fff" stroke="#7d8790" stroke-width=".8"/><path d="M3 4.500c.5-1.500 2.500-1.500 3 0 1 0 1.500.8 1 1.500H2.500c-.5-.7 0-1.500.5-1.500z" fill="#fff"/><path d="M1 15v-2.500C3 10 6 8.500 8.500 10.500c2 1.500 3.500 3 6.500 4.500z" fill="#3c8a2e"/><path d="M6.500 16L16 7.500v3L10 16z" fill="#fafafa"/></svg></span></td><td>30402610</td><td>Plants</td><td>Garage</td><td>16</td><td>₹10</td><td>₹20</td><td>Mar 26, 2020, 9:28:07 am</td><td><span class="acts"><i class="b1"></i><i class="b2"></i><i class="b3"></i><svg width="70" height="22" viewBox="0 0 70 22"><path d="M5 5h5.700v5.200H5zM11.300 5H17v5.200h-5.700zM5 10.800h5.700V16H5zM11.300 10.800H17V16h-5.700z" fill="#fffbe6"/><path d="M38.500 6H31.500a2 2 0 0 0-2 2v6a2 2 0 0 0 2 2h6a2 2 0 0 0 2-2v-4" fill="none" stroke="#fff" stroke-width="1.800"/><path d="M33.500 12.500l1-2.800L40 4.300l1.700 1.700-5.500 5.500z" fill="#fff"/><path d="M52 5.800h12v1.400H52z" fill="#ffe9e3"/><path d="M56.300 5.800V4.200h3.400v1.600" fill="none" stroke="#ffe9e3" stroke-width="1.200"/><path d="M53 8h10v8.500H53z" fill="#ffd9d0"/><path d="M55 8v8.500M57 8v8.500M59 8v8.500M61 8v8.500" stroke="#ffc4b8" stroke-width=".6"/></svg></span></td></tr>
    </table>
  </div>
</div>

<div id="status">localhost/inventory/customers/customers.php</div>
<div id="vlc">
  <div class="t" style="left:13px">01:22</div>
  <div class="trk"></div><div class="fil"></div><div class="knob"></div>
  <div class="t" style="left:760px">08:37</div>
  <div class="vb" style="left:6px;top:31px;width:29px"><i style="position:absolute;left:8px;top:5px;width:4px;height:12px;background:#777"></i><i style="position:absolute;left:15px;top:5px;width:4px;height:12px;background:#777"></i></div>
  <div class="vb" style="left:55px"><svg class="abs" style="left:3px;top:3px" width="16" height="12" viewBox="0 0 16 12" fill="#8a8a8a"><path d="M1 2h2v9H1zM9 2v9L3 6.500zM15 2v9L9 6.500z"/></svg></div>
  <div class="vb" style="left:87px"><i style="position:absolute;left:7px;top:6px;width:9px;height:9px;background:#8a8a8a"></i></div>
  <div class="vb" style="left:119px"><svg class="abs" style="left:3px;top:3px" width="16" height="12" viewBox="0 0 16 12" fill="#8a8a8a"><path d="M13 2h2v9h-2zM7 2v9l6-4.500zM1 2v9l6-4.500z"/></svg></div>
  <div class="vb" style="left:193px"><svg class="abs" style="left:4px;top:3px" width="14" height="10" viewBox="0 0 14 10" fill="none" stroke="#8a8a8a" stroke-width="2"><path d="M5 0v5H0M9 0v5h5"/></svg></div>
  <div class="vb" style="left:584px"><svg class="abs" style="left:3px;top:5px" width="16" height="8" viewBox="0 0 16 8" fill="none" stroke="#8a8a8a" stroke-width="1.500"><path d="M1 4h14M4 1L1 4l3 3M12 1l3 3-3 3"/></svg></div>
  <div class="abs" style="left:645px;top:37px;font-size:9px;color:#777">80%</div>
  <svg class="abs" style="left:680px;top:37px" width="31" height="9" viewBox="0 0 31 9"><path d="M0 9L30 1v8" fill="#e6e6e6" stroke="#777" stroke-width="1"/></svg>
  <div class="abs" style="left:729px;top:40px;font-size:11.500px;color:#1b1b3a">01:22/08:37</div>
</div>
<div id="pausebox"><i style="left:9px"></i><i style="left:18px"></i></div>
<svg class="abs" style="left:666.800px;top:536.500px" width="14" height="21" viewBox="0 0 14 21"><path d="M1 1v16.500l4-3.800 2.600 6 2.400-1-2.600-5.800H13z" fill="#fff" stroke="#000" stroke-width="1.100" stroke-linejoin="round"/></svg>
<svg class="abs" style="left:78px;top:249px" width="20" height="24" viewBox="0 0 20 24"><path d="M6.500 2.200a1.500 1.500 0 0 1 3 0V9l.2-1.500a1.400 1.400 0 0 1 2.700.2v1l.2-.6a1.300 1.300 0 0 1 2.600.4v1l.3-.4a1.200 1.200 0 0 1 2.300.6V16c0 4-2.500 7-6 7s-4.800-1.500-6.500-4.500L2 13.500c-.6-1.200 1-2.400 2.200-1.300l2.300 2.300z" fill="#fff" stroke="#1c2530" stroke-width="1.200" stroke-linejoin="round"/></svg>
</body></html>
